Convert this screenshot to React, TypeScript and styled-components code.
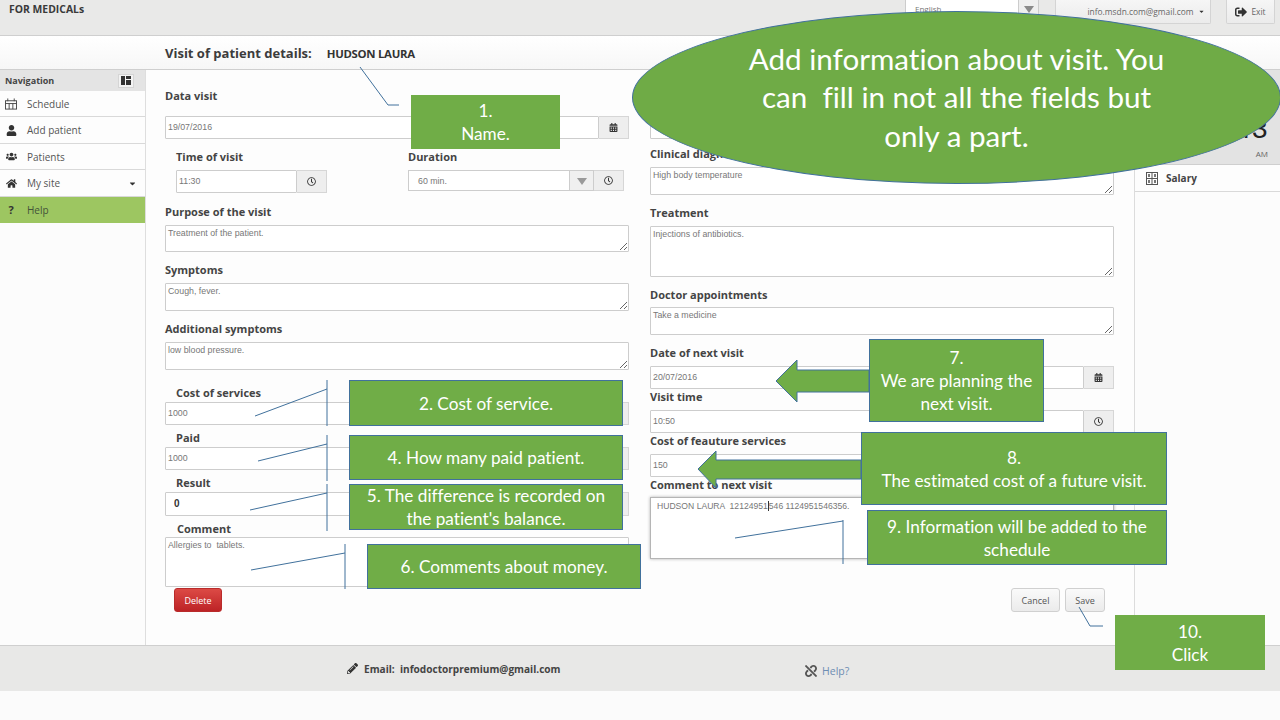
import React from "react";
import styled, { createGlobalStyle } from "styled-components";
import {
  FaCalendarAlt,
  FaCaretDown,
  FaHome,
  FaPencilAlt,
  FaRegClock,
  FaSignOutAlt,
  FaUnlink,
  FaUser,
  FaUsers,
} from "react-icons/fa";

const GlobalStyle = createGlobalStyle`
  html, body {
    margin: 0;
    padding: 0;
    background: #fbfbfb;
  }
  * {
    box-sizing: border-box;
  }
`;

const Page = styled.div`
  position: relative;
  display: flex;
  flex-direction: column;
  width: 1280px;
  height: 720px;
  overflow: hidden;
  font-family: "Open Sans", sans-serif;
  color: #444;
  background: #fbfbfb;
`;

const TopBar = styled.header`
  display: flex;
  justify-content: space-between;
  height: 36px;
  padding: 0 5px 0 9px;
  background: #e9e9e8;
  border-bottom: 1px solid #cfcfcf;
`;

const Brand = styled.div`
  margin-top: 3px;
  font-size: 10.4px;
  line-height: 13px;
  font-weight: 700;
  color: #3a3a3a;
`;

const TopActions = styled.div`
  display: flex;
  align-items: flex-start;
`;

const LangSelect = styled.div`
  display: flex;
  justify-content: space-between;
  width: 134px;
  height: 17px;
  margin-right: 16px;
  padding-left: 9px;
  background: #fff;
  border: 1px solid #ccc;
  border-top: 0;
  font-size: 8px;
  line-height: 18px;
  color: #777;
`;

const LangArrow = styled.span`
  display: flex;
  justify-content: center;
  width: 20px;
  padding-top: 6px;
  background: #efefef;
  border-left: 1px solid #ccc;
  &::after {
    content: "";
    border: 5px solid transparent;
    border-top: 7px solid #8a8a8a;
  }
`;

const TopButton = styled.div<{ $w: number; $mr?: number; $pl?: number }>`
  display: flex;
  align-items: center;
  justify-content: center;
  gap: 4px;
  width: ${({ $w }) => $w}px;
  height: 24px;
  margin-right: ${({ $mr }) => $mr ?? 0}px;
  padding-left: ${({ $pl }) => $pl ?? 0}px;
  background: linear-gradient(#f6f6f6, #ebebeb);
  border: 1px solid #d4d4d4;
  border-top: 0;
  border-radius: 0 0 2px 2px;
  font-size: 8.4px;
  color: #666;
  svg {
    color: #333;
  }
`;

const TitleBar = styled.div`
  display: flex;
  align-items: center;
  height: 34px;
  padding-left: 165px;
  background: linear-gradient(#fff, #f7f7f7);
  border-bottom: 1px solid #cfcfcf;
`;

const PageTitle = styled.h1`
  margin: 0 15px 0 0;
  font-size: 13px;
  line-height: 16px;
  font-weight: 700;
  color: #3c3c3c;
`;

const PatientName = styled.span`
  margin-top: 2px;
  font-size: 11.4px;
  font-weight: 700;
  letter-spacing: -0.3px;
  color: #333;
`;

const Body = styled.div`
  display: flex;
  height: 575px;
`;

const SideNav = styled.nav`
  flex: none;
  width: 146px;
  background: #fcfcfc;
  border-right: 1px solid #dedede;
`;

const NavHead = styled.div`
  display: flex;
  align-items: center;
  justify-content: space-between;
  height: 21px;
  padding: 0 11px 0 5px;
  background: #e4e4e4;
  font-size: 9px;
  font-weight: 700;
  color: #444;
`;

const NavToggle = styled.span`
  display: flex;
  align-items: center;
  justify-content: center;
  width: 16px;
  height: 14px;
  background: #f3f3f3;
  border: 1px solid #d5d5d5;
`;

const NavItem = styled.div<{ $active?: boolean; $h?: number }>`
  display: flex;
  align-items: center;
  height: ${({ $h }) => $h ?? 26}px;
  padding: 0 8px 0 5px;
  background: ${({ $active }) => ($active ? "#9dc661" : "#fdfdfd")};
  border-bottom: 1px solid ${({ $active }) => ($active ? "#9dc661" : "#d9d9d9")};
  font-size: 10px;
  color: ${({ $active }) => ($active ? "#44533a" : "#555")};
`;

const NavIcon = styled.span`
  display: flex;
  flex: none;
  justify-content: center;
  width: 12px;
  margin-right: 10px;
  font-size: 11px;
  font-weight: 700;
  color: #333;
`;

const NavLabel = styled.span`
  flex: 1;
`;

const Form = styled.main`
  flex: 1;
  display: grid;
  grid-template-columns: 464px 464px;
  column-gap: 21px;
  padding: 19px 0 0 19px;
  background: #fdfdfd;
`;

const Column = styled.div`
  display: flex;
  flex-direction: column;
`;

const Field = styled.div<{ $mt?: number; $gap?: number; $indent?: number }>`
  display: flex;
  flex-direction: column;
  gap: ${({ $gap }) => $gap ?? 6}px;
  margin-top: ${({ $mt }) => $mt ?? 0}px;
  & > label {
    padding-left: ${({ $indent }) => $indent ?? 0}px;
  }
`;

const Label = styled.label`
  font-size: 11px;
  line-height: 14px;
  font-weight: 700;
  color: #444;
`;

const Control = styled.div<{ $h?: number; $w?: number }>`
  display: flex;
  width: ${({ $w }) => ($w ? `${$w}px` : "100%")};
  height: ${({ $h }) => $h ?? 23}px;
`;

const TextInput = styled.input<{ $strong?: boolean }>`
  flex: 1;
  min-width: 0;
  height: 100%;
  padding: 0 2px 1px;
  background: #fff;
  border: 1px solid #cdcdcd;
  border-radius: 1px;
  outline: none;
  font-family: "Liberation Sans", sans-serif;
  font-size: ${({ $strong }) => ($strong ? "10px" : "8.8px")};
  font-weight: ${({ $strong }) => ($strong ? 700 : 400)};
  color: ${({ $strong }) => ($strong ? "#333" : "#777")};
  padding-left: ${({ $strong }) => ($strong ? "8px" : "2px")};
`;

const Addon = styled.span`
  display: flex;
  flex: none;
  align-items: center;
  justify-content: center;
  width: 30px;
  height: 100%;
  background: #eeeeee;
  border: 1px solid #d6d6d6;
  border-left: 0;
  font-size: 9px;
  color: #333;
`;

const TimeRow = styled.div`
  display: flex;
  margin-top: 11px;
  padding-left: 11px;
`;

const TimeField = styled(Field)`
  width: 232px;
`;

const DurationSelect = styled.div`
  display: flex;
  align-items: center;
  justify-content: space-between;
  flex: none;
  width: 186px;
  height: 21px;
  padding-left: 9px;
  background: #fff;
  border: 1px solid #cdcdcd;
  font-family: "Liberation Sans", sans-serif;
  font-size: 8.8px;
  color: #777;
`;

const SelectArrow = styled.span`
  display: flex;
  justify-content: center;
  width: 24px;
  height: 100%;
  padding-top: 7px;
  background: #f0f0f0;
  border-left: 1px solid #cdcdcd;
  &::after {
    content: "";
    height: 0;
    border: 5px solid transparent;
    border-top: 7px solid #9a9a9a;
  }
`;

const TextArea = styled.textarea<{ $h: number }>`
  display: block;
  width: 100%;
  height: ${({ $h }) => $h}px;
  padding: 2px;
  background: #fff;
  border: 1px solid #cdcdcd;
  border-radius: 1px;
  outline: none;
  font-family: "Liberation Sans", sans-serif;
  font-size: 8.8px;
  line-height: 11px;
  color: #777;
`;

const FocusedArea = styled.div`
  height: 62px;
  padding: 3px 6px;
  background: #fff;
  border: 1px solid #b5b5b5;
  box-shadow: 0 0 3px rgba(0, 0, 0, 0.3);
  font-family: "Liberation Sans", sans-serif;
  font-size: 8.6px;
  line-height: 11px;
  color: #777;
  white-space: pre;
`;

const TextCaret = styled.span`
  border-left: 1px solid #333;
`;

const Button = styled.button<{ $danger?: boolean; $w: number }>`
  width: ${({ $w }) => $w}px;
  height: 24px;
  padding: 0;
  background: ${({ $danger }) =>
    $danger ? "linear-gradient(#dc4a45, #bd2326)" : "linear-gradient(#fafafa, #ebebeb)"};
  border: 1px solid ${({ $danger }) => ($danger ? "#b92b2b" : "#d0d0d0")};
  border-radius: 3px;
  font-family: "Open Sans", sans-serif;
  font-size: 9px;
  color: ${({ $danger }) => ($danger ? "#fff" : "#555")};
`;

const DeleteButton = styled(Button)`
  align-self: flex-start;
  margin: 1px 0 0 9px;
`;

const FormActions = styled.div`
  display: flex;
  justify-content: flex-end;
  gap: 5px;
  margin-top: 29px;
  padding-right: 9px;
`;

const RightRail = styled.aside`
  flex: none;
  width: 146px;
  background: #fcfcfc;
  border-left: 1px solid #dcdcdc;
`;

const ClockPanel = styled.div`
  display: flex;
  flex-direction: column;
  align-items: flex-end;
  height: 95px;
  padding: 44px 12px 0 0;
  background: #e3e3e3;
  border-bottom: 1px solid #cfcfcf;
`;

const ClockDigits = styled.div`
  font-family: "Liberation Mono", monospace;
  font-size: 28px;
  line-height: 34px;
  color: #222;
`;

const ClockMeridiem = styled.div`
  font-size: 8px;
  line-height: 12px;
  color: #666;
`;

const RailItem = styled.div`
  display: flex;
  align-items: center;
  gap: 8px;
  height: 27px;
  padding-left: 11px;
  background: #fdfdfd;
  border-bottom: 1px solid #d9d9d9;
  font-size: 10px;
  font-weight: 700;
  color: #444;
`;

const Footer = styled.footer`
  display: flex;
  align-items: center;
  height: 46px;
  padding-left: 347px;
  background: #e8e8e7;
  border-top: 1px solid #cfcfcf;
`;

const FooterMail = styled.div`
  display: flex;
  align-items: center;
  gap: 6px;
  width: 458px;
  font-size: 10.1px;
  font-weight: 700;
  white-space: pre;
  color: #444;
`;

const FooterHelp = styled.div`
  display: flex;
  align-items: center;
  gap: 5px;
  margin-top: 4px;
  font-size: 10.5px;
  color: #6d8db3;
  svg {
    color: #555;
  }
`;

const Leaders = styled.svg`
  position: absolute;
  top: 0;
  left: 0;
  pointer-events: none;
`;

const Callout = styled.div<{ $x: number; $y: number; $w: number; $h: number; $plain?: boolean }>`
  position: absolute;
  left: ${({ $x }) => $x}px;
  top: ${({ $y }) => $y}px;
  width: ${({ $w }) => $w}px;
  height: ${({ $h }) => $h}px;
  display: flex;
  align-items: center;
  justify-content: center;
  background: #70ad47;
  border: 1px solid ${({ $plain }) => ($plain ? "#70ad47" : "#41719c")};
  font-family: Lato, sans-serif;
  font-size: 17.2px;
  font-variant-ligatures: none;
  line-height: 23px;
  text-align: center;
  white-space: pre;
  color: #fff;
`;

const Bubble = styled.div`
  position: absolute;
  left: 632px;
  top: 11px;
  width: 649px;
  height: 173px;
  display: flex;
  align-items: center;
  justify-content: center;
  background: #6fab46;
  border: 1px solid #41719c;
  border-radius: 50%;
  font-family: Lato, sans-serif;
  font-size: 29.6px;
  font-variant-ligatures: none;
  line-height: 38.5px;
  text-align: center;
  white-space: pre;
  color: #fff;
`;

const PanelsIcon = () => (
  <svg width="10" height="9" viewBox="0 0 10 9" fill="#333">
    <rect x="0" y="0" width="4" height="9" />
    <rect x="5" y="0" width="5" height="3" />
    <rect x="5" y="4" width="5" height="5" />
  </svg>
);

const ScheduleIcon = () => (
  <svg width="13" height="12" viewBox="0 0 13 12" fill="none" stroke="#444">
    <rect x="0.5" y="2.5" width="12" height="9" />
    <path d="M0.5 5.5h12M4.5 5.5v6M8.5 5.5v6M3 0v3M10 0v3" />
  </svg>
);

const SalaryIcon = () => (
  <svg width="12" height="13" viewBox="0 0 12 13" fill="none" stroke="#555">
    <rect x="0.5" y="0.5" width="11" height="12" />
    <path d="M6 0.5v12M0.5 6.5h11" />
    <path d="M3 2v3M9 2v3M3 8v3M9 8v3" strokeWidth="2" stroke="#777" />
  </svg>
);

const CalendarAddon = () => (
  <Addon>
    <FaCalendarAlt />
  </Addon>
);

const ClockAddon = () => (
  <Addon>
    <FaRegClock />
  </Addon>
);

const App = () => (
  <Page>
    <GlobalStyle />
    <TopBar>
      <Brand>FOR MEDICALs</Brand>
      <TopActions>
        <LangSelect>
          English
          <LangArrow />
        </LangSelect>
        <TopButton $w={156} $mr={15} $pl={26}>
          info.msdn.com@gmail.com <FaCaretDown size={7} />
        </TopButton>
        <TopButton $w={49}>
          <FaSignOutAlt size={12} /> Exit
        </TopButton>
      </TopActions>
    </TopBar>

    <TitleBar>
      <PageTitle>Visit of patient details:</PageTitle>
      <PatientName>HUDSON LAURA</PatientName>
    </TitleBar>

    <Body>
      <SideNav>
        <NavHead>
          Navigation
          <NavToggle>
            <PanelsIcon />
          </NavToggle>
        </NavHead>
        <NavItem>
          <NavIcon>
            <ScheduleIcon />
          </NavIcon>
          <NavLabel>Schedule</NavLabel>
        </NavItem>
        <NavItem $h={27}>
          <NavIcon>
            <FaUser />
          </NavIcon>
          <NavLabel>Add patient</NavLabel>
        </NavItem>
        <NavItem>
          <NavIcon>
            <FaUsers />
          </NavIcon>
          <NavLabel>Patients</NavLabel>
        </NavItem>
        <NavItem $h={27}>
          <NavIcon>
            <FaHome />
          </NavIcon>
          <NavLabel>My site</NavLabel>
          <FaCaretDown size={9} color="#333" />
        </NavItem>
        <NavItem $active>
          <NavIcon>?</NavIcon>
          <NavLabel>Help</NavLabel>
        </NavItem>
      </SideNav>

      <Form>
        <Column>
          <Field $gap={13}>
            <Label>Data visit</Label>
            <Control>
              <TextInput readOnly value="19/07/2016" />
              <CalendarAddon />
            </Control>
          </Field>
          <TimeRow>
            <TimeField>
              <Label>Time of visit</Label>
              <Control $w={151}>
                <TextInput readOnly value="11:30" />
                <ClockAddon />
              </Control>
            </TimeField>
            <Field>
              <Label>Duration</Label>
              <Control $h={21}>
                <DurationSelect>
                  60 min.
                  <SelectArrow />
                </DurationSelect>
                <ClockAddon />
              </Control>
            </Field>
          </TimeRow>
          <Field $mt={12}>
            <Label>Purpose of the visit</Label>
            <TextArea $h={27} readOnly value="Treatment of the patient." />
          </Field>
          <Field $mt={11}>
            <Label>Symptoms</Label>
            <TextArea $h={28} readOnly value="Cough, fever." />
          </Field>
          <Field $mt={11}>
            <Label>Additional symptoms</Label>
            <TextArea $h={28} readOnly value="low blood pressure." />
          </Field>
          <Field $mt={16} $gap={2} $indent={11}>
            <Label>Cost of services</Label>
            <Control>
              <TextInput readOnly value="1000" />
              <Addon />
            </Control>
          </Field>
          <Field $mt={6} $gap={2} $indent={11}>
            <Label>Paid</Label>
            <Control>
              <TextInput readOnly value="1000" />
              <Addon />
            </Control>
          </Field>
          <Field $mt={6} $gap={2} $indent={11}>
            <Label>Result</Label>
            <Control $h={24}>
              <TextInput $strong readOnly value="0" />
              <Addon />
            </Control>
          </Field>
          <Field $mt={6} $gap={1} $indent={12}>
            <Label>Comment</Label>
            <TextArea $h={50} readOnly value="Allergies to  tablets." />
          </Field>
          <DeleteButton $danger $w={48}>Delete</DeleteButton>
        </Column>

        <Column>
          <Field $mt={27}>
            <Control>
              <TextInput readOnly />
            </Control>
          </Field>
          <Field $mt={8}>
            <Label>Clinical diagnosis</Label>
            <TextArea $h={28} readOnly value="High body temperature" />
          </Field>
          <Field $mt={11}>
            <Label>Treatment</Label>
            <TextArea $h={51} readOnly value="Injections of antibiotics." />
          </Field>
          <Field $mt={11} $gap={5}>
            <Label>Doctor appointments</Label>
            <TextArea $h={28} readOnly value="Take a medicine" />
          </Field>
          <Field $mt={11}>
            <Label>Date of next visit</Label>
            <Control>
              <TextInput readOnly value="20/07/2016" />
              <CalendarAddon />
            </Control>
          </Field>
          <Field $mt={1}>
            <Label>Visit time</Label>
            <Control>
              <TextInput readOnly value="10:50" />
              <ClockAddon />
            </Control>
          </Field>
          <Field $mt={1}>
            <Label>Cost of feauture services</Label>
            <Control>
              <TextInput readOnly value="150" />
            </Control>
          </Field>
          <Field $mt={1} $gap={5}>
            <Label>Comment to next visit</Label>
            <FocusedArea>
              HUDSON LAURA  12124951<TextCaret />546 1124951546356.
            </FocusedArea>
          </Field>
          <FormActions>
            <Button $w={49}>Cancel</Button>
            <Button $w={40}>Save</Button>
          </FormActions>
        </Column>
      </Form>

      <RightRail>
        <ClockPanel>
          <ClockDigits>10:43</ClockDigits>
          <ClockMeridiem>AM</ClockMeridiem>
        </ClockPanel>
        <RailItem>
          <SalaryIcon />
          Salary
        </RailItem>
      </RightRail>
    </Body>

    <Footer>
      <FooterMail>
        <FaPencilAlt size={11} color="#333" />
        Email:  infodoctorpremium@gmail.com
      </FooterMail>
      <FooterHelp>
        <FaUnlink size={12} />
        Help?
      </FooterHelp>
    </Footer>

    <Leaders width="1280" height="720" viewBox="0 0 1280 720" fill="none" stroke="#41719c">
      <polyline points="360,67 388,105 399,105" />
      <path d="M327 380V426M255 416L327 389" />
      <path d="M327 435V481M258 461L327 444" />
      <path d="M327 484V531M250 510L327 493" />
      <path d="M345 544V589M251 570L345 553" />
      <path d="M843 520V564M735 538L843 521" />
      <polyline points="1079,607 1090,626 1103,626" />
      <polygon fill="#70ad47" points="869,370 797,370 797,360 776,381 797,402 797,392 869,392" />
      <polygon fill="#70ad47" points="861,460 716,460 716,451 698,469 716,488 716,479 861,479" />
    </Leaders>

    <Callout $plain $x={411} $y={95} $w={149} $h={54}>{"1.\nName."}</Callout>
    <Callout $x={349} $y={380} $w={274} $h={46}>2. Cost of service.</Callout>
    <Callout $x={349} $y={435} $w={274} $h={45}>4. How many paid patient.</Callout>
    <Callout $x={349} $y={484} $w={274} $h={46}>{"5. The difference is recorded on\nthe patient's balance."}</Callout>
    <Callout $x={367} $y={544} $w={274} $h={45}>6. Comments about money.</Callout>
    <Callout $x={869} $y={339} $w={175} $h={83}>{"7.\nWe are planning the\nnext visit."}</Callout>
    <Callout $x={861} $y={432} $w={306} $h={73}>{"8.\nThe estimated cost of a future visit."}</Callout>
    <Callout $x={867} $y={510} $w={300} $h={55}>{"9. Information will be added to the\nschedule"}</Callout>
    <Callout $plain $x={1115} $y={615} $w={150} $h={55}>{"10.\nClick"}</Callout>
    <Bubble>{"Add information about visit. You\ncan  fill in not all the fields but\nonly a part."}</Bubble>
  </Page>
);

export default App;
